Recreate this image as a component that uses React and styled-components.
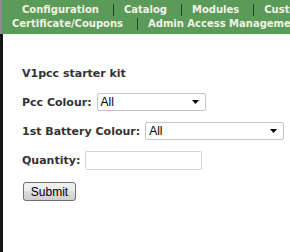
import styled, { createGlobalStyle } from "styled-components";

const GlobalStyle = createGlobalStyle`
  html, body {
    margin: 0;
    padding: 0;
    background: #ffffff;
  }
  body {
    font-family: "DejaVu Sans", Verdana, sans-serif;
  }
`;

const Page = styled.div`
  width: 290px;
  height: 252px;
  overflow: hidden;
  display: flex;
  flex-direction: column;
  background: #ffffff;
`;

const Nav = styled.nav`
  height: 34px;
  box-sizing: border-box;
  background: #5a9b5a;
  border-left: 2px solid #8c8c8c;
  display: flex;
  flex-direction: column;
  padding-top: 3px;
  overflow: hidden;
`;

const NavRow = styled.div`
  display: flex;
  align-items: center;
  height: 13px;
  margin-bottom: 1px;
  padding-left: ${(p) => p.$indent}px;
  white-space: nowrap;
`;

const NavLink = styled.a`
  font-size: 10px;
  font-weight: bold;
  color: #f2f2e2;
  text-decoration: none;
  padding-right: ${(p) => (p.$last ? 0 : 14)}px;
`;

const Sep = styled.span`
  width: 1px;
  height: 12px;
  background: #1c4a1c;
  margin-right: 10px;
  flex-shrink: 0;
`;

const Body = styled.div`
  flex: 1;
  border-left: 3px solid #161616;
  padding: 33px 0 0 19px;
  display: flex;
  flex-direction: column;
  align-items: flex-start;
`;

const Title = styled.div`
  font-size: 11px;
  font-weight: bold;
  color: #333333;
  margin-bottom: 13px;
`;

const Field = styled.div`
  display: flex;
  align-items: center;
  gap: 5px;
  margin-bottom: ${(p) => p.$gap}px;
`;

const Label = styled.label`
  font-size: 11px;
  font-weight: bold;
  color: #333333;
`;

const SelectBox = styled.div`
  width: ${(p) => p.$width}px;
  height: 18px;
  box-sizing: border-box;
  border: 1px solid #c4c4c4;
  border-radius: 2px;
  background: #ffffff;
  display: flex;
  align-items: center;
  justify-content: space-between;
  padding: 0 6px 0 3px;
  font-family: "Liberation Sans", Arial, sans-serif;
  font-size: 12px;
  color: #000000;
`;

const TextInput = styled.input`
  width: 117px;
  height: 19px;
  box-sizing: border-box;
  border: 1px solid #d2d2d8;
  border-radius: 2px;
  padding: 0 3px;
  font-family: "Liberation Sans", Arial, sans-serif;
  font-size: 12px;
  outline: none;
`;

const Button = styled.button`
  width: 53px;
  height: 19px;
  box-sizing: border-box;
  margin-left: 1px;
  border: 1px solid #707070;
  border-radius: 3px;
  background: linear-gradient(#f2f2f2 0%, #ebebeb 45%, #dddddd 50%, #cfcfcf 100%);
  font-family: "Liberation Sans", Arial, sans-serif;
  font-size: 12px;
  color: #000000;
  padding: 0;
  cursor: pointer;
`;

const Arrow = () => (
  <svg width="7" height="4" viewBox="0 0 7 4">
    <path d="M0 0H7L3.5 4Z" fill="#000000" />
  </svg>
);

const App = () => (
  <>
    <GlobalStyle />
    <Page>
      <Nav>
        <NavRow $indent={20}>
          <NavLink>Configuration</NavLink>
          <Sep />
          <NavLink>Catalog</NavLink>
          <Sep />
          <NavLink>Modules</NavLink>
          <Sep />
          <NavLink $last>Customers</NavLink>
        </NavRow>
        <NavRow $indent={10}>
          <NavLink>Certificate/Coupons</NavLink>
          <Sep />
          <NavLink $last>Admin Access Management</NavLink>
        </NavRow>
      </Nav>
      <Body>
        <Title>V1pcc starter kit</Title>
        <Field $gap={11}>
          <Label>Pcc Colour:</Label>
          <SelectBox $width={109}>
            <span>All</span>
            <Arrow />
          </SelectBox>
        </Field>
        <Field $gap={11}>
          <Label>1st Battery Colour:</Label>
          <SelectBox $width={139}>
            <span>All</span>
            <Arrow />
          </SelectBox>
        </Field>
        <Field $gap={12}>
          <Label>Quantity:</Label>
          <TextInput type="text" />
        </Field>
        <Button type="submit">Submit</Button>
      </Body>
    </Page>
  </>
);

export default App;
